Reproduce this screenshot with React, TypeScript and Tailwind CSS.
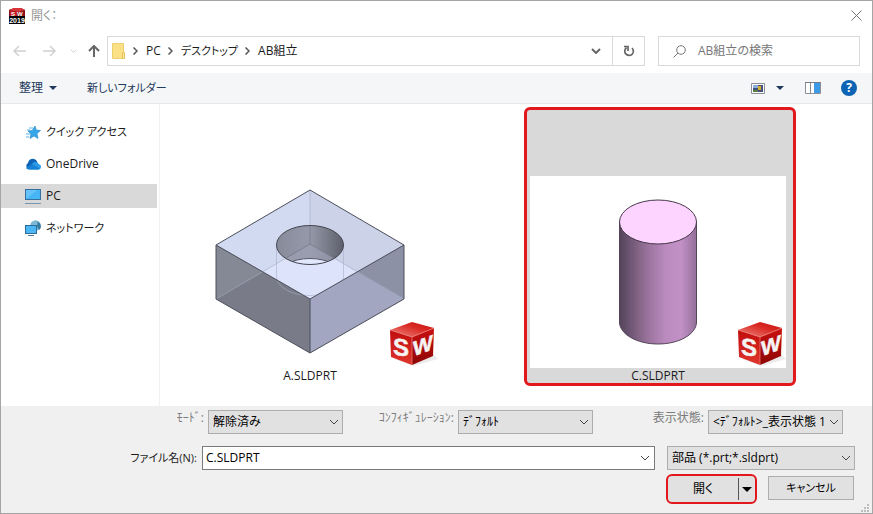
import { useState } from "react";
import type { ReactNode } from "react";

function Chevron({ className }: { className: string }) {
    return (
        <svg viewBox="0 0 10 6" className={className} fill="none" stroke="currentColor">
            <path d="M1 1l4 4 4-4" />
        </svg>
    );
}

function AppIcon() {
    return (
        <svg viewBox="0 0 16 16" className="h-4 w-4">
            <path d="M0 2l5-2h7l4 2v7H0z" fill="#8f1015" />
            <path d="M0 2l5-2h7l4 2-7 2z" fill="#d8353a" />
            <path d="M1 3l7 1v5H1z" fill="#c51d22" />
            <rect y="8" width="16" height="8" fill="#000" />
            <g fontFamily="Liberation Sans" fontWeight="700" fill="#fff">
                <text x="2" y="8" fontSize="6">
                    S
                </text>
                <text x="8" y="8" fontSize="6">
                    W
                </text>
                <text x="8" y="15" fontSize="7" textAnchor="middle">
                    2019
                </text>
            </g>
        </svg>
    );
}

function CubeLogo() {
    return (
        <g transform="translate(208 146)">
            <path d="M4 37l19 7 25-7-6-6z" fill="#999" opacity="0.2" />
            <path d="M0 8L22 0l22 6-22 9z" fill="url(#cubeTop)" />
            <path d="M0 8l22 7v28L1 35z" fill="url(#cubeLeft)" />
            <path d="M22 15l22-9-1 28-21 9z" fill="url(#cubeRight)" />
            <path d="M0 8l22 7 22-9M22 15v28" fill="none" stroke="#f0847c" strokeWidth="0.7" />
            <g
                fontFamily="'Liberation Sans',sans-serif"
                fontWeight="700"
                fill="#f6f3f3"
                stroke="#f6f3f3"
                strokeWidth="0.5"
            >
                <text x="3" y="32" fontSize="24" transform="skewY(8)">
                    S
                </text>
                <text x="23" y="43" fontSize="21" transform="skewY(-20)">
                    W
                </text>
            </g>
        </g>
    );
}

function BlockModel() {
    return (
        <svg viewBox="0 0 256 192" className="h-48 w-64">
            <defs>
                <linearGradient id="hole">
                    <stop offset="0" stopColor="#888b9a" />
                    <stop offset="0.5" stopColor="#9699a9" />
                    <stop offset="1" stopColor="#5d5f6b" />
                </linearGradient>
                <linearGradient id="cubeTop" x1="0" x2="1" y1="1" y2="0">
                    <stop offset="0" stopColor="#ee8a80" />
                    <stop offset="0.6" stopColor="#da2a24" />
                    <stop offset="1" stopColor="#c3120f" />
                </linearGradient>
                <linearGradient id="cubeLeft" x1="0" x2="0" y1="0" y2="1">
                    <stop offset="0" stopColor="#c00d0d" />
                    <stop offset="1" stopColor="#e0352c" />
                </linearGradient>
                <linearGradient id="cubeRight" x1="0" x2="0" y1="0" y2="1">
                    <stop offset="0" stopColor="#c9110f" />
                    <stop offset="1" stopColor="#8d0606" />
                </linearGradient>
                <clipPath id="rim">
                    <ellipse cx="128" cy="69" rx="33.5" ry="19.5" />
                </clipPath>
            </defs>
            <path d="M128 14L34 69l94 54z" fill="#d1daf1" />
            <path d="M128 14l94 55-94 54z" fill="#ccd2e8" />
            <path d="M81 96l47-28 47 28-47 27z" fill="#dce3fb" />
            <path d="M34 69l94 54v54l-94-54z" fill="#797c88" />
            <path d="M34 69l47 27-47 27z" fill="#858895" />
            <path d="M222 69l-94 54v54l94-54z" fill="#a2a6c0" />
            <path d="M222 69l-47 27 47 27z" fill="#8d91a6" />
            <path
                d="M34 123l94-55 94 55M128 14v54M94.500 69v31c0 11 15 19.500 33.500 19.500s33.500-8.500 33.500-19.500V69"
                fill="none"
                stroke="#a6adc4"
                strokeWidth="0.6"
            />
            <ellipse cx="128" cy="69" rx="33.500" ry="19.500" fill="url(#hole)" />
            <g clipPath="url(#rim)">
                <path d="M128 68l34 20H94z" fill="#9da0b2" opacity="0.7" />
                <path d="M128 49v19m-34 20l34-20 34 20" fill="none" stroke="#6e7180" strokeWidth="0.6" />
                <ellipse cx="128" cy="102" rx="33.500" ry="19.500" fill="#e1e7fd" stroke="#555866" />
            </g>
            <ellipse cx="128" cy="69" rx="33.500" ry="19.500" fill="none" stroke="#44464f" />
            <path
                d="M128 14L34 69v54l94 54 94-54V69zM34 69l94 54 94-54M128 123v54"
                fill="none"
                stroke="#4c4e5a"
                strokeLinejoin="round"
            />
            <CubeLogo />
        </svg>
    );
}

function CylinderModel() {
    return (
        <svg viewBox="0 0 256 192" className="h-48 w-64 bg-white">
            <defs>
                <linearGradient id="side">
                    <stop offset="0" stopColor="#544359" />
                    <stop offset="0.12" stopColor="#6a5370" />
                    <stop offset="0.35" stopColor="#977199" />
                    <stop offset="0.6" stopColor="#bb8bbe" />
                    <stop offset="0.8" stopColor="#c290c5" />
                    <stop offset="1" stopColor="#94709a" />
                </linearGradient>
            </defs>
            <path
                d="M89.500 46v100c0 12 17 22 38.500 22s38.500-10 38.500-22V46z"
                fill="url(#side)"
                stroke="#54455a"
            />
            <ellipse cx="128" cy="46" rx="38.500" ry="22" fill="#fdd3ff" stroke="#453849" />
            <CubeLogo />
        </svg>
    );
}

function PlaceIcon({ name }: { name: string }) {
    if (name === "quick") {
        return (
            <svg viewBox="0 0 16 16" className="h-4 w-4">
                <path
                    d="M10 2l1.200 4 4.300.500-3.500 3 1 5-4-2.500-4 2.500 1-4.500-3-3 4.300-.5z"
                    fill="#35a6ea"
                    stroke="#1f7fc6"
                    strokeWidth="0.6"
                />
                <path d="M4 4h4M2 6h3M1 10h4M1 13h3" stroke="#55b4ec" />
            </svg>
        );
    }
    if (name === "onedrive") {
        return (
            <svg viewBox="0 0 16 16" className="h-4 w-4">
                <path d="M3 7a4.800 4.800 0 0 1 8.500-2.500L13 8l-8 5H3.500A3.300 3.300 0 0 1 3 7z" fill="#0f64b8" />
                <path d="M7 8c2-3 6-2 6.500 0a2.700 2.700 0 0 1-.5 5.500H4z" fill="#2b9be8" />
                <path d="M1 12l6-4 8 5-2 .500H3.500A3.300 3.300 0 0 1 1 12z" fill="#1580d4" />
            </svg>
        );
    }
    if (name === "pc") {
        return (
            <svg viewBox="0 0 16 16" className="h-4 w-4">
                <rect x="0.500" y="1.500" width="15" height="10" fill="#45b5f5" stroke="#356f9f" />
                <path d="M1 11L12 2H1z" fill="#7bcdfb" opacity="0.6" />
                <path d="M0 15.500h16" stroke="#7595ae" />
            </svg>
        );
    }
    return (
        <svg viewBox="0 0 16 16" className="h-4 w-4">
            <circle cx="10.500" cy="5.500" r="5.300" fill="#7fb9d6" />
            <path d="M10 1c3 0 3 3 2 5l2 4c3-2 2-7-1-8z" fill="#33789f" />
            <rect x="0.500" y="5.500" width="11" height="8" fill="#4bb6f3" stroke="#2b6c9b" />
            <path d="M3 15.500h6" stroke="#4c7899" />
        </svg>
    );
}

const places = [
    { name: "quick", label: "クイック アクセス" },
    { name: "onedrive", label: "OneDrive" },
    { name: "pc", label: "PC" },
    { name: "network", label: "ネットワーク" },
];

function Tile({
    name,
    selected,
    onClick,
    children,
}: {
    name: string;
    selected: boolean;
    onClick: () => void;
    children: ReactNode;
}) {
    return (
        <button
            type="button"
            onClick={onClick}
            className={
                selected
                    ? "flex w-[272px] flex-col items-start rounded-md border-[3px] border-[#e3181c] bg-[#d9d9d9] pt-[66px] pl-[3px]"
                    : "flex w-[272px] flex-col items-start rounded-md border-[3px] border-transparent pt-[66px] pl-[3px]"
            }
        >
            {children}
            <span className="w-64 text-center leading-[15px]">{name}</span>
        </button>
    );
}

function Field({ id, label, option }: { id: string; label: string; option: string }) {
    return (
        <div className="flex">
            <label htmlFor={id} className="w-[115px] shrink-0 pr-1 text-right leading-4 text-[#7b7b7b]">
                {label}
            </label>
            <Select id={id} option={option} />
        </div>
    );
}

function Select({ id, option, label }: { id: string; option: string; label?: string }) {
    return (
        <div className="relative min-w-0 flex-1">
            <select
                id={id}
                aria-label={label}
                className="h-6 w-full appearance-none border border-[#adadad] bg-[#e1e1e1] pr-4 pl-1 text-xs text-black"
            >
                <option>{option}</option>
            </select>
            <Chevron className="pointer-events-none absolute top-2 right-1 h-2 w-2.5 text-[#444]" />
        </div>
    );
}

export default function App() {
    const [selected, setSelected] = useState("C.SLDPRT");

    return (
        <div className="flex min-h-screen flex-col border border-[#a5a5a5] bg-white font-['Open_Sans','Noto_Sans_CJK_JP',sans-serif] text-xs text-[#1b1b1b] [font-feature-settings:'palt']">
            <header className="flex h-[35px] items-center pr-2 pb-[6px] pl-2">
                <AppIcon />
                <h1 className="ml-[6px] flex-1 text-[#999]">開く：</h1>
                <button type="button" aria-label="閉じる" className="flex h-6 w-4 items-center justify-center">
                    <svg viewBox="0 0 11 11" className="h-[11px] w-[11px]" stroke="#777">
                        <path d="M.5.5l10 10m0-10l-10 10" />
                    </svg>
                </button>
            </header>

            <nav className="flex h-[30px] items-center pr-3 pl-3">
                <button type="button" aria-label="戻る" className="mr-[17px]">
                    <svg viewBox="0 0 13 12" className="h-3 w-[13px]" fill="none" stroke="#d0d0d0" strokeWidth="1.500">
                        <path d="M13 6H1m5-5L1 6l5 5" />
                    </svg>
                </button>
                <button type="button" aria-label="進む" className="mr-[14px]">
                    <svg viewBox="0 0 13 12" className="h-3 w-[13px]" fill="none" stroke="#d0d0d0" strokeWidth="1.500">
                        <path d="M0 6h12M7 1l5 5-5 5" />
                    </svg>
                </button>
                <button type="button" aria-label="最近表示した場所" className="mr-[11px]">
                    <Chevron className="h-2 w-[7px] text-[#bbb]" />
                </button>
                <button type="button" aria-label="上へ" className="mr-[7px]">
                    <svg viewBox="0 0 12 12" className="h-3 w-3" fill="none" stroke="#666" strokeWidth="2">
                        <path d="M6 12V1M1 6l5-5 5 5" />
                    </svg>
                </button>
                <div className="flex h-[30px] flex-1 items-center border border-[#d9d9d9] pl-1">
                    <svg viewBox="0 0 14 16" className="h-4 w-[14px]">
                        <path d="M.5.5h11v15H.5z" fill="#fbe085" stroke="#edcf6c" />
                        <path d="M10.500 9.500h2v6h-2z" fill="#fbe89f" stroke="#e4c35a" />
                    </svg>
                    {["PC", "デスクトップ", "AB組立"].map((crumb) => (
                        <span key={crumb} className="flex items-center">
                            <svg viewBox="0 0 5 8" className="ml-[7px] h-2 w-[5px]" fill="none" stroke="#555" strokeWidth="1.500">
                                <path d="M.5.5L4 4 .5 7.500" />
                            </svg>
                            <a href="#" className={crumb === "デスクトップ" ? "ml-2 text-[11px]" : "ml-2"}>
                                {crumb}
                            </a>
                        </span>
                    ))}
                    <button type="button" aria-label="以前の場所" className="ml-auto flex h-full w-8 items-center justify-center">
                        <Chevron className="h-[6px] w-[10px] stroke-2 text-[#666]" />
                    </button>
                    <button
                        type="button"
                        aria-label="最新の情報に更新"
                        className="flex h-full w-8 items-center justify-center border-l border-[#d9d9d9]"
                    >
                        <svg viewBox="0 0 12 12" className="h-3 w-3" fill="none" stroke="#666" strokeWidth="1.700">
                            <path d="M9 3a4.300 4.300 0 1 1-5.500-.3M1 1.500h4V6" />
                        </svg>
                    </button>
                </div>
                <div className="ml-[13px] flex h-[30px] w-[202px] items-center border border-[#d9d9d9] pl-[14px]">
                    <svg viewBox="0 0 13 13" className="h-[13px] w-[13px] shrink-0" fill="none" stroke="#777">
                        <circle cx="8" cy="5" r="4.300" />
                        <path d="M5 8l-4.500 4.500" />
                    </svg>
                    <input
                        aria-label="検索"
                        placeholder="AB組立の検索"
                        className="ml-3 w-full min-w-0 outline-none placeholder:text-[#767676]"
                    />
                </div>
            </nav>

            <div className="mt-[7px] flex h-[31px] items-center border-b border-[#e6e8ec] bg-[#f5f6f7] pr-[15px] pl-[18px] text-[#1e395b]">
                <button type="button" className="flex items-center gap-[6px]">
                    整理
                    <svg viewBox="0 0 8 4" className="h-1 w-2">
                        <path d="M0 0h8L4 4z" fill="#1e395b" />
                    </svg>
                </button>
                <button type="button" className="ml-[30px] text-[11px]">
                    新しいフォルダー
                </button>
                <button type="button" aria-label="表示方法の変更" className="ml-auto">
                    <svg viewBox="0 0 14 11" className="h-[11px] w-[14px]">
                        <path d="M.5.5h13v10H.5z" fill="#fff" stroke="#8a8f98" />
                        <path d="M2 2h10v7H2z" fill="#42517d" />
                        <path d="M2 2h5v3H2z" fill="#8babdc" />
                        <path d="M7 3h3v4H7z" fill="#d5ae2d" />
                        <path d="M2 7h5v2H2z" fill="#568041" />
                    </svg>
                </button>
                <button type="button" aria-label="その他のオプション" className="ml-[11px]">
                    <svg viewBox="0 0 8 4" className="h-1 w-2">
                        <path d="M0 0h8L4 4z" fill="#1e395b" />
                    </svg>
                </button>
                <button type="button" aria-label="プレビュー ウィンドウ" className="ml-[21px]">
                    <svg viewBox="0 0 16 12" className="h-3 w-4">
                        <path d="M.5.5h15v11H.5zM5.500 1v11" fill="#fff" stroke="#8a8f98" />
                        <path d="M9 1h6v10H9z" fill="#3d9be6" />
                        <path d="M0 .5h16" stroke="#777c86" />
                    </svg>
                </button>
                <button
                    type="button"
                    aria-label="ヘルプ"
                    className="ml-5 flex h-4 w-4 items-center justify-center rounded-full bg-[#0e64b4] font-bold text-white"
                >
                    ?
                </button>
            </div>

            <main className="flex flex-1">
                <aside className="flex w-[159px] shrink-0 flex-col gap-2 border-r border-[#f1f1f1] pt-4 pr-[2px]">
                    {places.map(({ name, label }) => (
                        <a
                            key={name}
                            href="#"
                            className={
                                name === "pc"
                                    ? "flex h-6 items-center gap-[5px] bg-[#d9d9d9] pl-6"
                                    : name === "onedrive"
                                      ? "flex h-6 items-center gap-[5px] pl-6"
                                      : "flex h-6 items-center gap-[5px] pl-6 text-[11px]"
                            }
                        >
                            <PlaceIcon name={name} />
                            {label}
                        </a>
                    ))}
                </aside>
                <section className="flex flex-1 flex-wrap content-start gap-x-[76px] gap-y-4 pt-[3px] pb-5 pl-4">
                    <Tile name="A.SLDPRT" selected={selected === "A.SLDPRT"} onClick={() => setSelected("A.SLDPRT")}>
                        <BlockModel />
                    </Tile>
                    <Tile name="C.SLDPRT" selected={selected === "C.SLDPRT"} onClick={() => setSelected("C.SLDPRT")}>
                        <CylinderModel />
                    </Tile>
                </section>
            </main>

            <footer className="bg-[#f0f0f0] pt-1">
                <div className="grid grid-cols-3 pr-[29px] pl-[92px]">
                    <Field id="mode" label="ﾓｰﾄﾞ:" option="解除済み" />
                    <Field id="config" label="ｺﾝﾌｨｷﾞｭﾚｰｼｮﾝ:" option="ﾃﾞﾌｫﾙﾄ" />
                    <Field id="state" label="表示状態:" option="<ﾃﾞﾌｫﾙﾄ>_表示状態 1" />
                </div>
                <div className="mt-3 flex items-center pr-[17px]">
                    <label htmlFor="file" className="w-[201px] shrink-0 pr-[5px] text-right text-[11px]">
                        ファイル名(N):
                    </label>
                    <div className="flex h-6 flex-1 items-center border border-[#7a7a7a] bg-white pr-1 pl-[3px]">
                        <input
                            id="file"
                            value={selected}
                            onChange={(e) => setSelected(e.target.value)}
                            className="min-w-0 flex-1 text-black outline-none"
                        />
                        <button type="button" aria-label="ファイル名の一覧">
                            <Chevron className="h-2 w-2.5 text-[#444]" />
                        </button>
                    </div>
                    <div className="ml-3 flex w-[188px]">
                        <Select id="type" label="ファイルの種類" option="部品 (*.prt;*.sldprt)" />
                    </div>
                </div>
                <div className="mt-1 flex items-start justify-end pr-[18px]">
                    <div className="flex h-[30px] w-[91px] rounded-md border-2 border-[#e3181c] bg-[#e1e1e1] py-[2px]">
                        <button type="button" className="flex-1 border-r border-[#555] text-black">
                            開く
                        </button>
                        <button type="button" aria-label="開くオプション" className="flex w-4 items-center justify-center">
                            <svg viewBox="0 0 10 5" className="h-[5px] w-[10px]">
                                <path d="M0 0h10L5 5z" />
                            </svg>
                        </button>
                    </div>
                    <button
                        type="button"
                        className="mt-[2px] ml-[11px] h-6 w-[86px] border border-[#adadad] bg-[#e1e1e1] text-[11px] text-black"
                    >
                        キャンセル
                    </button>
                </div>
                <div className="flex h-[9px] justify-end pr-[2px]">
                    <svg viewBox="0 0 9 9" className="h-[9px] w-[9px]" fill="#bdbdbd">
                        <path d="M6 0h2v2H6zM3 3h2v2H3zM6 3h2v2H6zM0 6h2v2H0zM3 6h2v2H3zM6 6h2v2H6z" />
                    </svg>
                </div>
            </footer>
        </div>
    );
}
